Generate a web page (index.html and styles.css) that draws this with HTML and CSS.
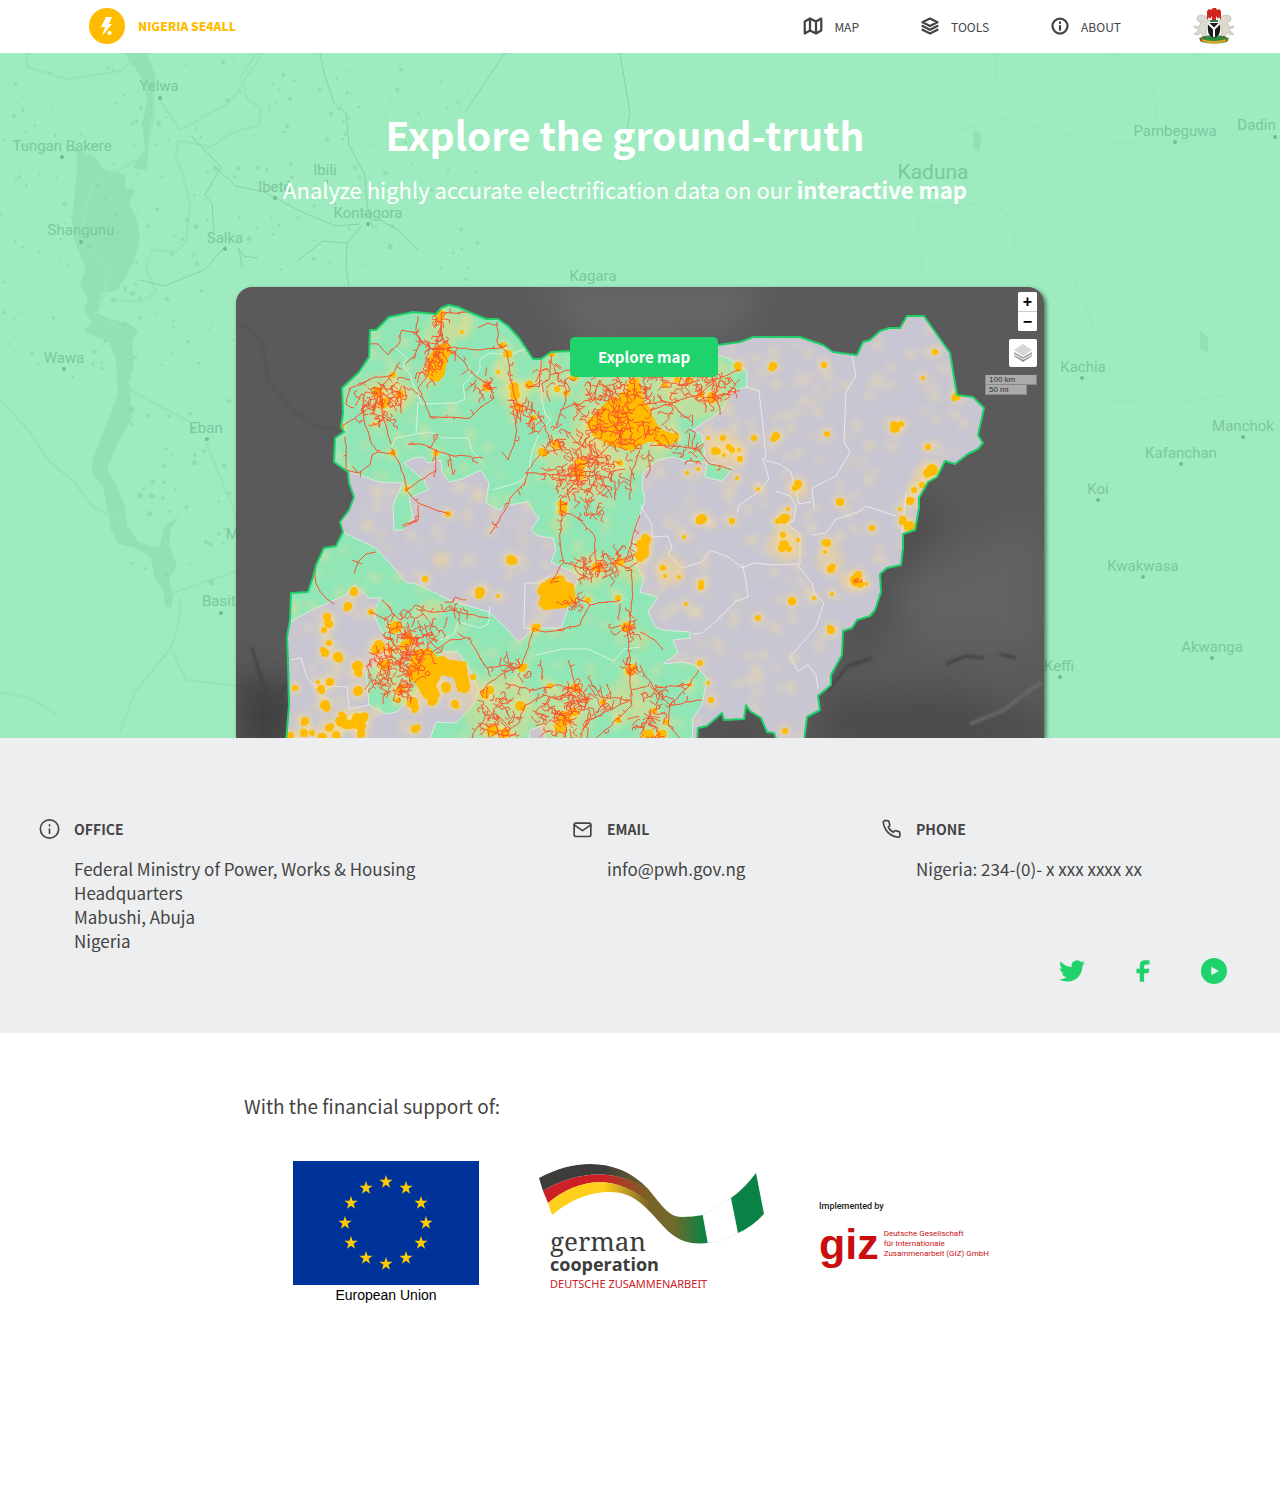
FILE: index.html
```html
<!DOCTYPE html>
<html lang="en">
<head>
<meta charset="utf-8">
<meta name="viewport" content="width=device-width, initial-scale=1">
<title>Nigeria SE4ALL</title>
<link rel="stylesheet" href="styles.css">
</head>
<body>
<header class="topbar">
  <a class="brand" href="#">
    <svg class="brand-mark" viewBox="0 0 36 36" aria-hidden="true">
      <circle cx="18" cy="18" r="18" fill="#fb0"/>
      <path d="M17 9h6l-3 7h3L13 28l3-9h-4z" fill="#fff"/>
      <circle cx="20.500" cy="25" r="2" fill="#fff"/>
    </svg>
    <span>NIGERIA SE4ALL</span>
  </a>
  <nav class="nav">
    <a class="nav-link" href="#map">
      <svg class="icon" viewBox="0 0 24 24" aria-hidden="true"><path d="M1 6v16l7-4 8 4 7-4V2l-7 4-8-4-7 4zM8 2v16M16 6v16"/></svg>
      <span>MAP</span>
    </a>
    <a class="nav-link" href="#tools">
      <svg class="icon" viewBox="0 0 24 24" aria-hidden="true"><path d="M12 2 2 7l10 5 10-5-10-5zM2 17l10 5 10-5M2 12l10 5 10-5"/></svg>
      <span>TOOLS</span>
    </a>
    <a class="nav-link" href="#about">
      <svg class="icon" viewBox="0 0 24 24" aria-hidden="true"><circle cx="12" cy="12" r="10"/><path d="M12 17v-5M12 8v-1"/></svg>
      <span>ABOUT</span>
    </a>
    <svg class="arms" viewBox="0 0 42 36" role="img" aria-label="Coat of arms of Nigeria">
      <g fill="#dcd9cf" stroke="#b5b2a6" stroke-width=".6">
        <path d="M8 7c-4 0-5 4-3 6l3 1-2 5-5-1 1 2 4 1-3 4-2 1 4 1 3-3 2 6h5l-2-5 2-7 1-5-3-5z"/>
        <path d="M34 7c4 0 5 4 3 6l-3 1 2 5 5-1-1 2-4 1 3 4 2 1-4 1-3-3-2 6h-5l2-5-2-7-1-5 3-5z"/>
      </g>
      <path d="M6 30q15-6 30 0l-2 4q-13 3-26 0z" fill="#2f8a3c"/>
      <path d="M8 31q13 4 26 0v2q-13 5-26 0z" fill="#d9a520"/>
      <g fill="#c8281e"><circle cx="11" cy="29" r="1"/><circle cx="31" cy="29" r="1"/><circle cx="8" cy="32" r="1"/><circle cx="34" cy="32" r="1"/></g>
      <path d="M15 15h12v7q0 6-6 8-6-2-6-8z" fill="#1b1b1b"/>
      <path d="m15 15 6 6 6-6M21 20v9" fill="none" stroke="#fff" stroke-width="2"/>
      <path d="M17 12h8v2h-8z" fill="#36754a"/>
      <path d="M20 0h3l1 2 2-1 2 2 0 9-2-3-1 2-2-3v4h-4V8l-2 3-1-2-2 3 0-9 2-2 2 1z" fill="#d2231f"/>
    </svg>
  </nav>
</header>

<main>
  <section class="hero">
    <svg class="hero-map" viewBox="0 53 1280 685" preserveAspectRatio="xMidYMin slice" aria-hidden="true">
      <g class="water">
        <path d="M125 53l22 0 8 22-1 28-5 28-2 40-14-3 12-20-3-25 6-24-8-24z"/>
        <path d="M78 150l16 6 10 14 22 4-1 14 10 2-6 14 8 15 3 20-6 22-8 16-10 14-14 2-6 20 14 6 18 4 10 8-6 10 2 24-6 20-10 8-2-34-8-18-16-6-8-4 8-8-8-14 4-10-8-16 6-14-12-30-2-22 4-34z"/>
        <path d="M122 384h8l2 34-16 28-9 24 10 16 8 20 2 20 12 16 20 6 6-22 14-10-8 12-2 16 8 22-8 12 4 20-2 10-6-2-2-16-8-12-4-20-16-10-16-4-8-14-4-24-4-20-12-14 2-12 10-28 8-20z"/>
        <path d="M974 130l8 4-3 18-6-4zM1200 330l8 8v16l-8-6z"/>
      </g>
      <g class="rivers">
        <path d="M155 110l-10 46-52 28-10 34 2 28 22 22-2 24-10 24 28 14M178 140l-2 16 6 16 8 30-4 40-10 10-24-2-6 18 10 24 -16 10-26-2M27 53v14l40 12 54-8 14-14M257 53l-16 24 6 22 14 10-2 16-28 8-20 14-30-6M160 100l20 30 50-28 30-45"/>
        <path d="M0 400l30 32 18 28 26 22 18 24 26 14M170 594l70-24M181 597l-3 30-8 22-36 44-14 40M172 650l14 30 54 6M0 692l30 6 26 16M205 440l32 78M130 390l60 32"/>
      </g>
      <g class="rivers faint">
        <path d="M995 54v26l-20 22-20 30-14 42-22 40 2 58-16 30v40M955 132l46-14 66 16 38 10 60-4 60 2M1112 53l42 40 4 36M925 208l68-6 20 18 2 32 60 28 12 30 8 26 70 48M1100 400l70 4 60-10M1200 53l-48 36"/>
      </g>
      <g class="tracks">
        <path d="M190 135l31 32-16 28 7 8 2 28M214 166l22 20 28 6 38 20 34 14 24-2M320 53l4 20 10 30 12 10 3 32 16 30 2 30 6 24M362 225l-15 18-24-2-26 20M347 243l-1 25 3 18M380 220l18 10 20 20M140 280l24 6 40-16 20-22 M238 248l6 8 14 2M239 248l3 20M505 53l-40 60M620 53l10 60-10 50"/>
      </g>
      <g class="specks" id="specks"></g>
      <g class="places">
        <text x="159" y="91">Yelwa</text><circle cx="160" cy="98" r="2"/>
        <text x="62" y="151">Tungan Bakere</text><circle cx="62" cy="157" r="2"/>
        <text x="325" y="175">Ibili</text><circle cx="326" cy="182" r="2"/>
        <text x="275" y="192">Ibetó</text><circle cx="275" cy="198" r="2"/>
        <text x="368" y="218">Kontagora</text><circle cx="368" cy="224" r="2"/>
        <text x="81" y="235">Shangunu</text><circle cx="81" cy="242" r="2"/>
        <text x="225" y="243">Salka</text><circle cx="225" cy="249" r="2"/>
        <text x="593" y="281">Kagara</text>
        <text x="64" y="363">Wawa</text><circle cx="64" cy="369" r="2"/>
        <text x="206" y="433">Eban</text><circle cx="207" cy="439" r="2"/>
        <text x="250" y="539">Mokwa</text>
        <text x="223" y="606">Basita</text><circle cx="221" cy="613" r="2"/>
        <text x="-1" y="697">i</text>
        <text class="city" x="933" y="179">Kaduna</text><circle cx="934" cy="189" r="2"/>
        <text x="1175" y="136">Pambeguwa</text><circle cx="1175" cy="142" r="2"/>
        <text x="1277" y="130">Dadin Kowa</text><circle cx="1275" cy="137" r="2"/>
        <text x="1083" y="372">Kachia</text><circle cx="1082" cy="378" r="2"/>
        <text x="1243" y="431">Manchok</text><circle cx="1243" cy="437" r="2"/>
        <text x="1181" y="458">Kafanchan</text><circle cx="1181" cy="464" r="2"/>
        <text x="1098" y="494">Koi</text><circle cx="1098" cy="500" r="2"/>
        <text x="1143" y="571">Kwakwasa</text><circle cx="1143" cy="577" r="2"/>
        <text x="1212" y="652">Akwanga</text><circle cx="1212" cy="658" r="2"/>
        <text x="1059" y="671">Keffi</text><circle cx="1060" cy="677" r="2"/>
      </g>
    </svg>
    <div class="hero-text">
      <h1>Explore the ground-truth</h1>
      <p>Analyze highly accurate electrification data on our <strong>interactive map</strong></p>
    </div>
    <div class="panel">
      <svg class="panel-map" viewBox="236 287 808 451" preserveAspectRatio="xMidYMin slice" role="img" aria-label="Electrification map of Nigeria">
        <defs>
          <filter id="soft" x="-20%" y="-20%" width="140%" height="140%"><feGaussianBlur stdDeviation="3"/></filter>
          <filter id="wide" x="-50%" y="-50%" width="200%" height="200%"><feGaussianBlur stdDeviation="16"/></filter>
          <filter id="edge"><feGaussianBlur stdDeviation="1"/></filter>
          <clipPath id="land"><use href="#country"/></clipPath>
          <path id="country" d="M286 742L289 705 288 662 287 637 290 620 291 593 308 592 313 577 316 565 324 548 336 546 343 532 340 522 349 510 354 497 349 483 348 472 334 462 335 438 344 432 341 427 343 413 342 388 359 372 369 357 370 330 376 330 389 317 413 312 436 314 441 308 449 305 458 307 469 312 486 319 498 319 508 326 519 338 533 359 541 359 551 352 569 351 640 360 718 345 740 342 753 337 800 337 823 345 833 352 857 355 863 342 870 340 880 331 889 328 900 328 907 316 924 316 950 353 957 395 973 397 984 408 981 422 978 435 983 443 978 449 968 454 955 464 945 461 937 477 928 482 919 498 919 508 915 530 903 534 903 548 901 565 887 568 880 574 881 592 875 610 870 616 857 620 852 628 843 631 842 655 831 675 831 685 818 696 820 710 807 717 804 742 777 742 774 733 767 732 761 718 750 711 746 705 744 719 724 720 722 713 707 726 698 728 697 742Z"/>
        </defs>
        <rect x="236" y="287" width="808" height="451" fill="#5a5a5a"/>
        <g filter="url(#wide)">
          <path d="M540 280h220l-20 50-150 20z" fill="#666"/>
          <path d="M236 670l60 20v60h-60z" fill="#414141"/>
          <path d="M900 490l50 20-30 60-60 90-30 30z" fill="#505050"/>
          <path d="M890 580l150-60v130l-120 0z" fill="#626262"/>
          <path d="M700 725l60-10 20 30h-90zM820 700l120-10 110 30v30H820z" fill="#4b4b4b"/>
        </g>
        <g fill="none" stroke="#535353" stroke-width="2" filter="url(#edge)">
          <path d="M238 322l24 18 6 40 24 30 22 16 24 4"/>
        </g>
        <g fill="none" stroke="#444" stroke-width="3" filter="url(#edge)">
          <path d="M268 738v-40l-10-30-6-20M270 710l20-30M828 690l20-24 24-8M946 664l20-8 18 2M1000 654l16 4"/>
        </g>
        <path d="M970 724l34-14 26-20 12-8" fill="none" stroke="#666" stroke-width="4" filter="url(#edge)"/>
        <g clip-path="url(#land)">
          <use href="#country" fill="#c8c6d2"/>
          <path fill="#90e6b6" stroke="#d9ece0" d="M351 472L379 482 403 483 393 505 394 530 403 530 413 518 409 498 428 490 424 480 404 463 413 458 423 457 428 463 441 460 442 472 449 482 462 479 481 470 489 483 486 503 499 510 508 505 528 502 534 512 539 518 531 530 538 536 553 538 556 550 551 562 579 575 561 628 534 628 519 643 505 627 489 612 449 600 419 585 406 582 376 548 359 540 343 532 300 532 270 630 291 621 316 608 346 595 354 585 369 598 381 598 373 612 381 630 393 652 366 672 369 705 386 714 396 712 414 695 443 652 458 652 471 672 479 690 473 705 456 723 436 722 428 745 528 745 530 730 545 725 545 745 692 745 693 718 702 705 707 678 695 665 682 662 663 664 678 653 673 640 690 638 690 632 663 630 655 627 648 612 658 597 640 592 644 578 636 565 633 538 640 515 645 500 642 487 643 473 657 460 673 457 690 463 707 462 705 477 722 481 733 468 706 462 702 435 693 430 722 410 730 392 747 387 747 371 728 358 718 355 640 290 330 290 320 470Z"/>
          <g class="borders">
            <path d="M395 348l12 10-4 8 8 10 2 8 6 12 2 8 36-1 8-4-2-14 8-8-2-10M418 402l-2 32-20 4-4 8M416 434l16-2 10 6 26 0 4 12 10 12M476 375l4-6 0-10 10-6 20 2 15-6M540 360l2 40 3 14 6 6-10 10-6 14 -4 12-2 18-10 8-26 8M525 583h14l12-8M525 583l-1 45 12 1M536 655l26-6 26 0 26 12 10-12 16-2M640 505l12 20 0 12 16-1 4 12-4 6 14 14 20-6 8-12 20 8 12 10 12-5 20 2 26-1 0-30-14-10 8-4 2-14-6-10-14-5M742 563l4 18 2 16-12 4-22 22-12 10-10 1M797 565l15 18 2 10 10 10-8 24-26 30 8 14 10-6 8 10 2 14M812 535l14-2 10-14 14-4 10-4 6-5 30 10M747 387l12 4 4 36 3 30-3 2 6 20-12 14-18 12-2 8M765 460l14 4 12 8 8 32 12-2M852 356l4 20-10 16-2 50 6 10-14 24-24 12 2 20M291 660l10-2 6 20 14 14 10-6 16 1 2 22 20-4M440 640l14-6 4-12 22 6 8-4 2-18M902 534l4-40"/>
          </g>
          <g id="haze" filter="url(#soft)"></g>
          <g id="blobs"></g>
          <path fill="#fb0" d="M604 404l10-8 10 5 4-20 10-4 6 24 8 14 8 14 16 6-4 10-22-4-20 10-22-6-16-10 2-20z"/>
          <path fill="#fb0" d="M414 650l16-2 8 10 28 4 4 26-12 4-4-14-16-4-2 16-4 12-8-4-8-14-10-8z"/>
          <path fill="#fb0" d="M428 358l8-12 12-4 4 10-4 6-4 18-6 6-8-2-4-4z"/>
          <path fill="#fb0" d="M546 580l12-4 16 10 2 16-10 6-22 2-6-6z"/>
          <g id="grid" class="grid"></g>
        </g>
        <use href="#country" fill="none" stroke="#1fcf6a" stroke-width="2" stroke-linejoin="round"/>
      </svg>
      <a class="explore" href="#map">Explore map</a>
      <div class="controls">
        <div class="zoom">
          <button type="button" aria-label="Zoom in">+</button>
          <button type="button" aria-label="Zoom out">−</button>
        </div>
        <button class="layers" type="button" aria-label="Layers">
          <svg viewBox="0 0 18 18" aria-hidden="true">
            <path d="M0 11l9 5 9-5v1l-9 6-9-6z" fill="#8d8d8d"/><path d="M0 8l9 5 9-5v2l-9 5-9-5z" fill="#a5a5a5"/><path d="M0 6l9-6 9 6-9 6z" fill="#d6d6d6"/>
          </svg>
        </button>
        <div class="scale"><span>100 km</span><span class="miles">50 mi</span></div>
      </div>
    </div>
  </section>

  <section class="contact">
    <div class="contact-grid">
      <div class="contact-item">
        <svg class="icon" viewBox="0 0 24 24" aria-hidden="true"><circle cx="12" cy="12" r="11"/><path d="M12 17v-5M12 8v-1"/></svg>
        <div>
          <h2>OFFICE</h2>
          <address>Federal Ministry of Power, Works &amp; Housing<br>Headquarters<br>Mabushi, Abuja<br>Nigeria</address>
        </div>
      </div>
      <div class="contact-item">
        <svg class="icon" viewBox="0 0 24 24" aria-hidden="true"><rect x="2" y="5" width="20" height="16" rx="2"/><path d="m2 7 10 7 10-7"/></svg>
        <div>
          <h2>EMAIL</h2>
          <p>info@pwh.gov.ng</p>
        </div>
      </div>
      <div class="contact-item">
        <svg class="icon" viewBox="0 0 24 24" aria-hidden="true"><path d="M22 16.920v3a2 2 0 0 1-2.180 2 19.790 19.790 0 0 1-8.630-3.070 19.500 19.500 0 0 1-6-6A19.790 19.790 0 0 1 2.120 4.180 2 2 0 0 1 4.110 2h3a2 2 0 0 1 2 1.720c.13.960.36 1.900.7 2.810a2 2 0 0 1-.45 2.110L8.090 9.910a16 16 0 0 0 6 6l1.270-1.270a2 2 0 0 1 2.110-.45c.91.340 1.850.570 2.810.7A2 2 0 0 1 22 16.920z"/></svg>
        <div>
          <h2>PHONE</h2>
          <p>Nigeria: 234-(0)- x xxx xxxx xx</p>
        </div>
      </div>
    </div>
    <div class="social">
      <a href="#twitter" aria-label="Twitter"><svg viewBox="0 0 24 24"><path d="M23.953 4.570a10 10 0 01-2.825.775 4.958 4.958 0 002.163-2.723c-.951.555-2.005.959-3.127 1.184a4.920 4.920 0 00-8.384 4.482C7.690 8.095 4.067 6.130 1.640 3.162a4.822 4.822 0 00-.666 2.475c0 1.710.87 3.213 2.188 4.096a4.904 4.904 0 01-2.228-.616v.06a4.923 4.923 0 003.946 4.827 4.996 4.996 0 01-2.212.085 4.936 4.936 0 004.604 3.417 9.867 9.867 0 01-6.102 2.105c-.39 0-.779-.023-1.170-.067a13.995 13.995 0 007.557 2.209c9.053 0 13.998-7.496 13.998-13.985 0-.21 0-.42-.015-.63A9.935 9.935 0 0024 4.590z"/></svg></a>
      <a href="#facebook" aria-label="Facebook"><svg viewBox="0 0 24 24"><path d="M9 22V14H6v-4h3V7q0-5 5-5h4v4h-3q-2 0-2 2v2h5l-1 4h-4v8z"/></svg></a>
      <a href="#video" aria-label="Video"><svg viewBox="0 0 24 24"><path fill-rule="evenodd" d="M12 0a12 12 0 1 0 0 24 12 12 0 0 0 0-24zM9.500 8l7 4-7 4z"/></svg></a>
    </div>
  </section>

  <section class="support">
    <p class="support-title">With the financial support of:</p>
    <div class="logos">
      <figure class="eu">
        <svg viewBox="0 0 186 124" aria-hidden="true">
          <rect width="186" height="124" fill="#039"/>
          <defs><path id="star" d="M0-7L1.570-2.160H6.660L2.540.83 4.110 5.660 0 2.670-4.110 5.660-2.540.83-6.660-2.160H-1.570z"/></defs>
          <g fill="#fc0">
            <use href="#star" x="93" y="21"/><use href="#star" x="113" y="27"/><use href="#star" x="128" y="42"/><use href="#star" x="133" y="62"/><use href="#star" x="128" y="82"/><use href="#star" x="113" y="97"/><use href="#star" x="93" y="103"/><use href="#star" x="73" y="97"/><use href="#star" x="58" y="82"/><use href="#star" x="52" y="62"/><use href="#star" x="58" y="42"/><use href="#star" x="73" y="27"/>
          </g>
        </svg>
        <figcaption>European Union</figcaption>
      </figure>
      <svg class="german" viewBox="0 0 226 128" role="img" aria-label="German cooperation">
        <defs>
          <linearGradient id="olive" gradientUnits="userSpaceOnUse" x1="66" y1="0" x2="166" y2="0"><stop offset="0" stop-color="#7a6428" stop-opacity="0"/><stop offset=".45" stop-color="#7a6428"/><stop offset=".7" stop-color="#6f6a2a"/><stop offset="1" stop-color="#0a8245"/></linearGradient>
          <path id="ribbon" d="M1 15C40-6 82-4 110 26C124 42 130 54 144 54Q155 54 165 52L170 80C150 82 138 77 126 64C106 42 96 29 70 29Q40 30 14 52Z"/>
        </defs>
        <path d="M1 15C40-6 82-4 110 26L114 31C80 3 38 8 5 28Z" fill="#3c3c3b"/>
        <path d="M5 28C38 8 80 3 114 31L114 42C78 9 40 15 10 40Z" fill="#cb2026"/>
        <path d="M10 40C40 15 78 9 114 42L116 52C96 30 84 29 70 29Q40 30 14 52Z" fill="#ffcf1c"/>
        <use href="#ribbon" fill="url(#olive)"/>
        <path d="M165 52L193 35 200 70Q186 79 170 80Z" fill="#fff" stroke="#e6e6e6" stroke-width=".5"/>
        <path d="M193 35Q206 26 218 10L226 51Q214 64 200 70Z" fill="#0a8245"/>
        <text class="german-name" x="12" y="88">german</text>
        <text class="german-coop" x="12" y="108">cooperation</text>
        <text class="german-sub" x="12" y="125">DEUTSCHE ZUSAMMENARBEIT</text>
      </svg>
      <div class="giz">
        <p class="giz-by">Implemented by</p>
        <div class="giz-row">
          <span class="giz-mark">giz</span>
          <span class="giz-name">Deutsche Gesellschaft<br>für Internationale<br>Zusammenarbeit (GIZ) GmbH</span>
        </div>
      </div>
    </div>
  </section>
</main>
<script src="map.js"></script>
</body>
</html>
```
FILE: styles.css
```css
* { box-sizing: border-box; }
body { margin: 0; background: #fff; color: #444; font-family: "Noto Sans CJK JP", "Noto Sans", sans-serif; font-size: 17px; line-height: 24px; }
h1, h2, p, figure, address { margin: 0; font-style: normal; }
a { color: inherit; text-decoration: none; }
button { font: inherit; padding: 0; border: 0; background: #fff; }
svg { display: block; }
.icon { width: 21px; height: 20px; fill: none; stroke: #444; stroke-width: 2; stroke-linecap: round; stroke-linejoin: round; flex: none; }

.topbar { display: flex; justify-content: space-between; align-items: center; height: 53px; padding: 0 45px 1px 89px; }
.brand { display: flex; align-items: center; gap: 13px; color: #fb0; font-size: 12px; font-weight: 900; }
.brand-mark { width: 36px; height: 36px; }
.nav { display: flex; align-items: center; gap: 62px; font-size: 12px; }
.nav-link { display: flex; align-items: center; gap: 12px; }
.nav-link .icon { width: 18px; height: 18px; stroke-width: 3; overflow: visible; }
.nav-link span { padding-top: 2px; }
.arms { width: 42px; height: 36px; margin-left: 10px; }

.hero { position: relative; overflow: hidden; background: #9eebbf; padding-top: 53px; }
.hero-map { position: absolute; inset: 0; width: 100%; height: 100%; }
.water { fill: #94e0b5; }
.rivers { fill: none; stroke: #96e3b8; stroke-width: 2; }
.rivers.faint { opacity: .4; }
.tracks { fill: none; stroke: #84d3a8; stroke-width: 1; }
.specks { fill: #89d6aa; }
.places { fill: #7cc79e; font-family: Roboto, sans-serif; font-size: 15px; text-anchor: middle; }
.places circle { fill: #6cbd91; }
.places .city { font-size: 21px; }
.hero-text { position: relative; padding: 0 30px 0 0; text-align: center; color: #fff; }
.hero-text h1 { font-size: 39px; line-height: 56px; font-weight: 700; }
.hero-text p { font-size: 22px; line-height: 32px; margin-top: 11px; }
.panel { position: relative; width: 808px; max-width: 100%; aspect-ratio: 808 / 451; margin: 82px auto 0; border-radius: 16px 16px 0 0; overflow: hidden; display: flex; justify-content: center; align-items: flex-start; padding: 50px 0 0 8px; box-shadow: 2px 2px 4px #0008; }
.panel-map { position: absolute; inset: 0; width: 100%; height: 100%; }
.borders { fill: none; stroke: #fff; stroke-opacity: .6; stroke-width: 1; }
.grid { fill: none; stroke: #f9542c; stroke-width: 1; stroke-linejoin: round; }
.explore { position: relative; width: 148px; border-radius: 5px; background: #1fd26c; color: #fff; font-size: 15px; line-height: 40px; font-weight: 700; text-align: center; }
.controls { position: absolute; top: 5px; right: 7px; display: flex; flex-direction: column; align-items: flex-end; gap: 8px; }
.zoom { display: flex; flex-direction: column; gap: 1px; background: #ccc; border-radius: 2px; overflow: hidden; }
.zoom button { width: 19px; height: 19px; font: 700 16px/19px "Liberation Sans", sans-serif; color: #000; }
.layers { width: 28px; height: 28px; border-radius: 2px; display: grid; place-items: center; }
.layers svg { width: 18px; height: 18px; }
.scale { display: flex; flex-direction: column; align-items: flex-start; font: 8px/9px "Liberation Sans", sans-serif; color: #333; }
.scale span { width: 52px; padding-left: 3px; background: #aaa; border: 1px solid #888; border-top: 0; }
.scale .miles { width: 42px; }

.contact { background: #edeef0; padding: 79px 39px 49px; color: #444; }
.contact-grid { display: grid; grid-template-columns: 533fr 309fr 360fr; }
.contact-item { display: flex; gap: 14px; align-items: flex-start; }
.contact-item h2 { font-size: 14px; line-height: 24px; font-weight: 700; margin-bottom: 16px; }
.contact-item .icon { margin-top: 2px; }
.social { display: flex; justify-content: flex-end; align-items: center; gap: 45px; padding: 5px 14px 0 0; }
.social svg { width: 26px; height: 26px; fill: #1fd26c; }

.support { max-width: 792px; margin: 0 auto; padding: 58px 0 208px; }
.support-title { font-size: 19px; line-height: 30px; }
.logos { display: flex; align-items: flex-start; padding: 40px 0 0 49px; gap: 55px; }
.eu { width: 186px; }
.eu figcaption { font: 14px/20px "Liberation Sans", sans-serif; color: #000; text-align: center; }
.german { width: 226px; height: 128px; margin: 2px 0 0 4px; }
.german-name { font: 26px "Noto Serif", "Liberation Serif", serif; fill: #3c3c3b; }
.german-coop { font: 700 18px "Open Sans", sans-serif; fill: #3c3c3b; }
.german-sub { font: 11px "Noto Sans", sans-serif; fill: #cb2026; }
.giz { padding-top: 38px; color: #c80f0f; }
.giz-by { font: 500 9px/14px Roboto, sans-serif; color: #222; }
.giz-row { display: flex; align-items: center; gap: 5px; padding-top: 6px; }
.giz-mark { font: 700 43px/50px "Liberation Sans", sans-serif; }
.giz-name { font: 8px/10px Roboto, sans-serif; white-space: nowrap; }
```
FILE: map.js
```js
// Draws the settlements and the power grid over the map.
const NS = "http://www.w3.org/2000/svg";
let seed = 7;
const rnd = () => {
  seed = (seed * 1664525 + 1013904223) % 4294967296;
  return seed / 4294967296;
};
const spread = n => (rnd() - 0.5) * 2 * n;

function add(id, name, attrs) {
  const el = document.createElementNS(NS, name);
  for (const k in attrs) el.setAttribute(k, attrs[k]);
  document.getElementById(id).appendChild(el);
}
const dot = (id, x, y, r, fill, opacity = 1) => add(id, "circle", { cx: x, cy: y, r, fill, opacity });
const nums = s => s.trim().split(/[\s,]+/).map(Number);
const groups = (s, n) => {
  const v = nums(s), out = [];
  for (let i = 0; i < v.length; i += n) out.push(v.slice(i, i + n));
  return out;
};

// Settlements: x, y, radius
const towns = groups(`773 366 4 824 365 3 738 366 4 935 352 3 923 378 2 957 396 4 895 428 5 901 424 3 776 436 4
 827 434 3 723 438 3 754 438 3 715 451 4 729 447 3 732 450 3 708 438 2 724 455 2 740 459 3 739 450 2 687 473 2 698 469 2
 737 478 2 928 447 3 932 470 6 927 473 4 914 490 3 922 485 3 910 501 4 758 489 2 798 484 4 795 488 3 840 502 4 788 509 2
 702 519 5 732 521 3 784 519 5 778 521 3 684 537 2 798 540 2 783 535 3 784 545 5 789 549 3 827 543 4 872 528 3 903 521 4
 910 526 5 900 509 2 825 552 2 663 568 3 679 577 2 701 583 3 701 587 3 665 576 2 831 569 4 855 580 5 858 575 4 860 584 4
 866 584 2 832 594 2 814 598 2 792 601 4 758 618 3 831 630 4 686 604 2 700 663 3 711 700 3 785 731 3 708 683 2
 448 514 3 511 560 5 425 579 3 480 592 5 498 596 2 354 592 4 348 606 4 327 617 4 329 624 4 324 630 3 371 612 3
 329 643 3 325 653 4 338 657 5 358 666 5 358 672 4 330 682 4 321 689 4 318 682 2 295 688 3 358 691 5 325 705 5
 305 721 4 341 722 5 346 724 5 343 717 4 357 718 5 363 718 5 361 726 5 361 734 4 355 724 5 329 728 4 336 735 4 304 733 4 290 736 4 312 733 3 323 737 4
 376 649 5 379 645 5 396 627 6 404 646 4 455 704 4 446 687 5 413 702 5 415 707 4 415 729 4 433 700 5 435 692 4 473 677 3
 630 671 5 522 668 4 535 628 4 642 545 6 643 553 6 646 540 5 640 558 4 563 510 4 563 505 4 436 453 3 393 453 3 407 488 2
 441 314 4 439 320 3 462 332 2 503 345 3 508 354 4 514 387 5 515 395 5 529 385 4 518 407 4 533 418 3 486 387 4 498 372 2
 378 393 5 383 404 5 393 375 3 400 395 4 374 424 2 341 427 3 406 490 2 552 354 3 574 377 4 557 389 3 566 393 3
 595 424 8 625 398 6 640 412 10 656 436 6 580 464 6 575 470 4 556 445 4 542 452 4 580 475 5 620 463 3 661 441 5
 675 437 4 712 397 5 701 395 3 677 380 3 665 385 3 689 380 3 545 588 6 556 598 8 566 590 7 560 580 5 544 604 4
 598 567 5 620 562 4 588 600 3 626 627 5 618 598 3 422 665 8 432 675 9 442 662 6 460 668 6 464 686 6 426 690 6
 410 640 5 565 718 7 560 726 6 574 712 4 490 690 4 485 695 4 492 730 6 505 733 5 520 706 5 550 686 3 576 688 4
 603 702 3 618 720 3 648 735 6 661 735 5 654 711 3 666 722 3 690 685 2 400 690 4 398 700 3 384 665 5 390 650 3`, 3);
for (const [x, y, r] of towns) {
  dot("haze", x, y, r + 3, "#ffe08a", 0.6);
  dot("blobs", x, y, r, "#fb0");
  if (r > 3) dot("blobs", x + spread(3), y + spread(3), r - 1, "#fb0");
}
for (let i = 0; i < 760; i++) dot("haze", 290 + rnd() * 690, 310 + rnd() * 430, 2 + rnd() * 3, "#f6dea0", 0.45);
groups(`440 335 16 460 325 14 382 398 24 400 395 16 430 375 12 625 420 54 580 465 34 700 385 34 505 370 12 515 395 16
 725 450 20 925 480 14 800 490 10 785 545 18 830 560 14 670 570 16 405 670 30 500 710 36 565 715 30 630 700 24
 590 570 18 630 570 14 560 525 10 440 560 8 850 580 10 550 380 18 430 610 12 640 640 10`, 3)
  .forEach(([x, y, r]) => dot("haze", x, y, r, "#ffd87a", 0.35));

// Grid lines: a jagged trunk with short spurs
function walk(x, y, angle, steps, len) {
  let d = `M${x.toFixed(1)} ${y.toFixed(1)}`;
  for (let i = 0; i < steps; i++) {
    angle += rnd() < 0.4 ? (rnd() < 0.5 ? 1.3 : -1.3) : spread(0.4);
    x += Math.cos(angle) * len;
    y += Math.sin(angle) * len;
    d += `L${x.toFixed(1)} ${y.toFixed(1)}`;
  }
  return d;
}
function trunk(line, spurs) {
  const p = groups(line, 2);
  let d = `M${p[0]}`;
  for (let i = 1; i < p.length; i++) {
    const [ax, ay] = p[i - 1], [bx, by] = p[i];
    const n = Math.max(1, Math.round(Math.hypot(bx - ax, by - ay) / 5));
    for (let k = 1; k <= n; k++) {
      const x = ax + (bx - ax) * k / n + (k < n ? spread(1) : 0);
      const y = ay + (by - ay) * k / n + (k < n ? spread(1) : 0);
      d += `L${x.toFixed(1)} ${y.toFixed(1)}`;
      if (rnd() < spurs) {
        const side = Math.atan2(by - ay, bx - ax) + (rnd() < 0.5 ? 1.2 : -1.2);
        add("grid", "path", { d: walk(x, y, side, 1 + Math.floor(rnd() * 3), 3) });
      }
    }
  }
  add("grid", "path", { d });
}
`370 344 378 344 388 355 400 342 402 330 412 332 420 340 433 350 440 345|418 316 416 330 420 342 415 355 407 362
441 313 440 335 434 350|441 313 452 313 470 312|434 350 455 347 480 350 503 347
440 347 430 365 428 375 418 388 425 402 430 417 450 417 470 418 480 408 494 398 490 385 478 378 472 372 460 358 448 350
400 362 392 375 375 377 350 388 346 404|392 375 380 388 380 400 384 420 391 444|364 395 364 420 370 440 378 452 393 453 404 475 406 490
341 427 362 413 375 405|345 437 346 470 358 473 370 465 372 455 380 450|406 490 425 478 436 470 436 452
408 444 425 445 435 450 450 455 483 458|438 434 432 445|449 455 453 475|406 490 418 503 438 511 449 514|418 505 418 520 402 526
497 322 498 345 507 352 510 375 513 390 518 405 533 410 545 425 550 445 558 455|518 410 515 440 508 460 502 452
540 455 528 470 525 483 510 498 504 512 490 534|478 328 488 323 498 325|551 355 550 375 570 370|541 359 540 378
565 380 566 400 556 425|575 460 577 480 560 500 562 515 560 540 564 562 550 583|561 510 580 520 594 535 596 567 590 570
525 473 575 476 600 475 612 498|564 563 590 570 612 563 632 555|640 515 632 540 625 560|615 562 632 570 632 600 628 630 630 670 632 705 600 735
577 597 590 605 620 600|590 605 580 625 545 632 534 628 522 665 500 675 480 692|415 605 430 612 450 610 489 618
370 612 388 620 390 640|430 655 450 640 470 638 480 658 487 668 505 665 520 668|505 683 530 690 560 685 583 692
541 660 542 680|568 660 576 690|640 632 655 640 663 650|640 665 655 690 670 705 668 725 680 738|699 670 690 685 670 705 702 700
655 688 690 685|520 720 525 705 545 695 560 700|630 700 600 697 590 680|650 410 680 400 700 395 715 380 740 370
640 405 668 402 690 420|650 445 680 446 700 450 707 462 732 470|648 455 650 470 646 478|715 395 722 372|700 400 740 390
600 380 590 400 560 410|630 380 632 360|660 380 680 385 700 380|616 440 600 455 580 465|630 500 632 470 640 450
565 430 580 445|478 725 500 735 520 722|580 735 590 720 630 700|640 735 650 715|382 600 400 620 415 605`
  .split(/[|\n]/).forEach(l => trunk(l, 0.3));
add("grid", "path", { d: "M316 565Q311 585 326 598L334 604M376 552L366 554 358 562 354 574M352 560L362 564" });

// Dense urban networks: x, y, radius, number of feeders
groups(`620 425 46 110 640 385 28 30 580 465 30 60 380 402 24 46 398 392 12 12 438 350 14 24 430 370 12 14 680 385 34 40
 712 392 20 30 396 670 30 90 405 655 24 34 495 722 26 48 565 718 26 46 588 568 12 18 612 565 14 22 628 628 12 14
 518 410 10 12 535 420 12 12 484 384 10 14 440 318 10 8 550 375 16 14 580 485 18 22 690 450 18 14 575 690 14 12
 410 630 22 24 560 715 32 30 630 670 10 10 655 695 16 16 650 725 16 20 430 640 18 18 600 510 18 10 610 480 22 14
 575 602 8 12 456 608 12 8 520 668 10 10 602 702 10 12 857 580 2 4 600 400 30 26 560 440 18 14`, 4).forEach(([x, y, r, n]) => {
  for (let i = 0; i < n; i++) {
    const a = rnd() * 6.283, q = Math.pow(rnd(), 0.7) * r;
    add("grid", "path", { d: walk(x + Math.cos(a) * q, y + Math.sin(a) * q, rnd() * 6.283, 3 + Math.floor(rnd() * 4), Math.min(3, r / 5 + 1)) });
  }
});

// Small wooded patches on the hero backdrop
for (let i = 0; i < 260; i++) {
  const x = rnd() * 480, y = 60 + rnd() * 320;
  if (x > 236 && y > 280) continue;
  dot("specks", x, y, 1 + rnd() * rnd() * 2, "#89d6aa", 0.7);
}
for (let i = 0; i < 40; i++) dot("specks", 130 + rnd() * 100, 390 + rnd() * 200, 1 + rnd() * 2, "#89d6aa", 0.7);
```
